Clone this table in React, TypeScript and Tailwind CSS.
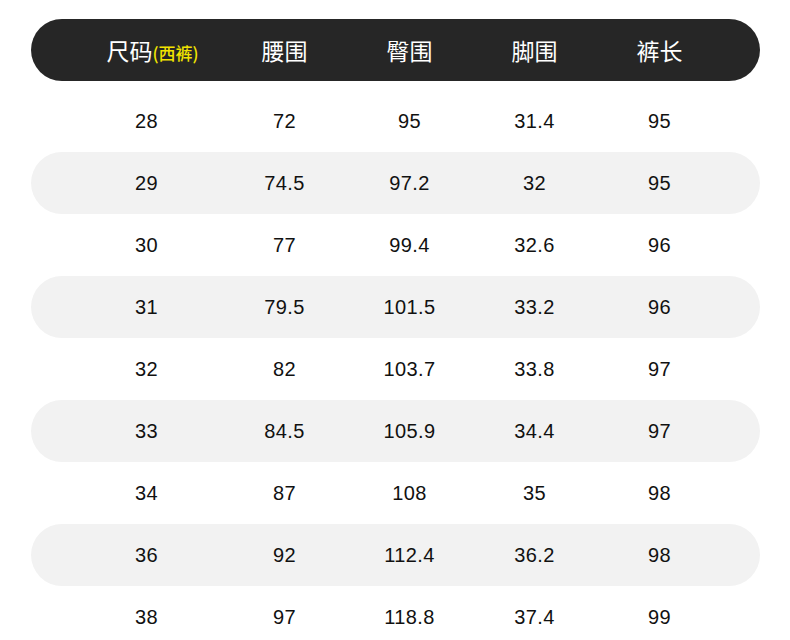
const headers = ['腰围', '臀围', '脚围', '裤长']

const rows = [
    ['28', '72', '95', '31.4', '95'],
    ['29', '74.5', '97.2', '32', '95'],
    ['30', '77', '99.4', '32.6', '96'],
    ['31', '79.5', '101.5', '33.2', '96'],
    ['32', '82', '103.7', '33.8', '97'],
    ['33', '84.5', '105.9', '34.4', '97'],
    ['34', '87', '108', '35', '98'],
    ['36', '92', '112.4', '36.2', '98'],
    ['38', '97', '118.8', '37.4', '99'],
]

export default function App() {
    return (
        <div className="w-[790px] h-[640px] overflow-hidden bg-white pt-[19px] pl-[31px] pr-[30px] font-['Liberation_Sans','Noto_Sans_CJK_SC',sans-serif]">
            {/* Header */}
            <div className="h-[62px] rounded-full bg-[#262626] pl-[40px] grid grid-cols-[151px_125px_125px_125px_125px] items-center">
                <div className="flex items-baseline justify-center pl-[12px] text-white font-['Noto_Sans_CJK_SC',sans-serif]">
                    <span className="text-[23px]">尺码</span>
                    <span className="text-[17px] font-medium text-[#f2e400]">(西裤)</span>
                </div>
                {headers.map((h) => (
                    <div key={h} className="text-center text-white text-[23px] font-['Noto_Sans_CJK_SC',sans-serif]">
                        {h}
                    </div>
                ))}
            </div>

            {/* Rows */}
            <div className="mt-[9px]">
                {rows.map((row, i) => (
                    <div
                        key={row[0]}
                        className={
                            'h-[62px] rounded-full pl-[40px] grid grid-cols-[151px_125px_125px_125px_125px] items-center text-[20px] tracking-[0.4px] text-[#111]' +
                            (i % 2 === 1 ? ' bg-[#f2f2f2]' : '')
                        }
                    >
                        {row.map((v, j) => (
                            <div key={j} className="text-center">
                                {v}
                            </div>
                        ))}
                    </div>
                ))}
            </div>
        </div>
    )
}
